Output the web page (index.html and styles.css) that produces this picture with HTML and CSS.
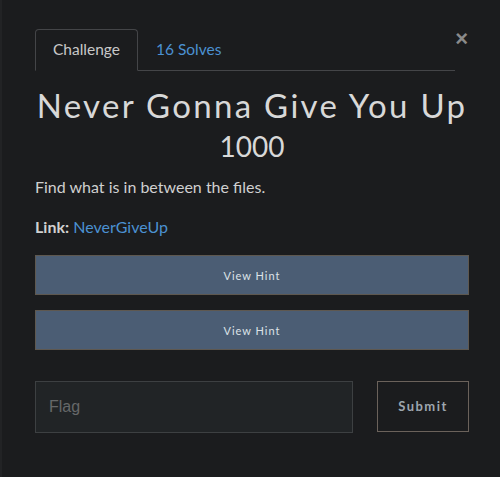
FILE: index.html
```html
<!DOCTYPE html>
<html>
<head>
<meta charset="utf-8">
<link rel="stylesheet" href="styles.css">
</head>
<body>
<div class="modal">
  <div class="head">
    <ul class="tabs">
      <li class="tab active">Challenge</li>
      <li class="tab link">16 Solves</li>
    </ul>
    <span class="close">&times;</span>
  </div>
  <h1 class="title">Never Gonna Give You Up</h1>
  <h2 class="value">1000</h2>
  <p class="desc">Find what is in between the files.</p>
  <p class="desc link-line"><b>Link:</b> <a class="a">NeverGiveUp</a></p>
  <button class="hint">View Hint</button>
  <button class="hint">View Hint</button>
  <div class="submit-row">
    <div class="flag">Flag</div>
    <button class="submit">Submit</button>
  </div>
</div>
</body>
</html>
```
FILE: styles.css
```css
html, body { margin: 0; padding: 0; }
body {
  background: #1b1c1e;
  width: 500px;
  height: 477px;
  overflow: hidden;
  font-family: Lato, "Open Sans", sans-serif;
  color: #d4d4d4;
  border-left: 2px solid #222325;
  box-sizing: border-box;
}
.modal {
  padding: 29px 31px 0 33px;
}
.head {
  display: flex;
  align-items: flex-start;
}
.tabs {
  list-style: none;
  margin: 0;
  padding: 0;
  display: flex;
  width: 420px;
  border-bottom: 1px solid #444548;
}
.tab {
  font-size: 15.5px;
  line-height: 20px;
  padding: 9px 17px 11px 17px;
  border: 1px solid transparent;
  border-radius: 4px 4px 0 0;
  margin-bottom: -1px;
}
.tab.active {
  border-color: #444548 #444548 #1b1c1e;
  color: #c8c8c8;
  background: #1b1c1e;
}
.tab.link { color: #4b91d2; }
.close {
  margin-left: auto;
  color: #8a8a8a;
  font-size: 22px;
  line-height: 20px;
  font-weight: 700;
  font-family: "Liberation Sans", sans-serif;
  margin-top: 0;
  margin-right: 1px;
}
.title {
  margin: 14px 0 0;
  text-align: center;
  font-size: 33px;
  font-weight: 400;
  letter-spacing: 2.3px;
  line-height: 40px;
  color: #d8d8d8;
}
.value {
  margin: 4px 0 0;
  text-align: center;
  font-size: 28px;
  font-weight: 400;
  line-height: 34px;
  color: #d8d8d8;
}
.desc {
  margin: 13px 0 0;
  font-size: 16px;
  line-height: 22px;
  color: #d0d0d0;
}
.link-line { margin-top: 18px; }
.a { color: #4b91d2; }
.hint {
  display: block;
  width: 434px;
  height: 40px;
  margin: 17px 0 0;
  background: #4b5d74;
  border: 1px solid #5e5850;
  color: #dde3e8;
  font-family: Lato, sans-serif;
  font-size: 11px;
  letter-spacing: 1px;
}
.hint + .hint { margin-top: 15px; }
.submit-row {
  display: flex;
  justify-content: space-between;
  align-items: flex-start;
  margin-top: 31px;
  width: 434px;
}
.flag {
  box-sizing: border-box;
  width: 318px;
  height: 52px;
  background: #212426;
  border: 1px solid #3d4042;
  color: #666869;
  font-family: "Liberation Sans", sans-serif;
  font-size: 16px;
  line-height: 50px;
  padding-left: 13px;
}
.submit {
  box-sizing: border-box;
  width: 92px;
  height: 51px;
  padding-bottom: 3px;
  background: transparent;
  border: 1px solid #6b625b;
  color: #9ea6ae;
  font-family: Lato, sans-serif;
  font-weight: 700;
  font-size: 13px;
  letter-spacing: 1.5px;
}
```
